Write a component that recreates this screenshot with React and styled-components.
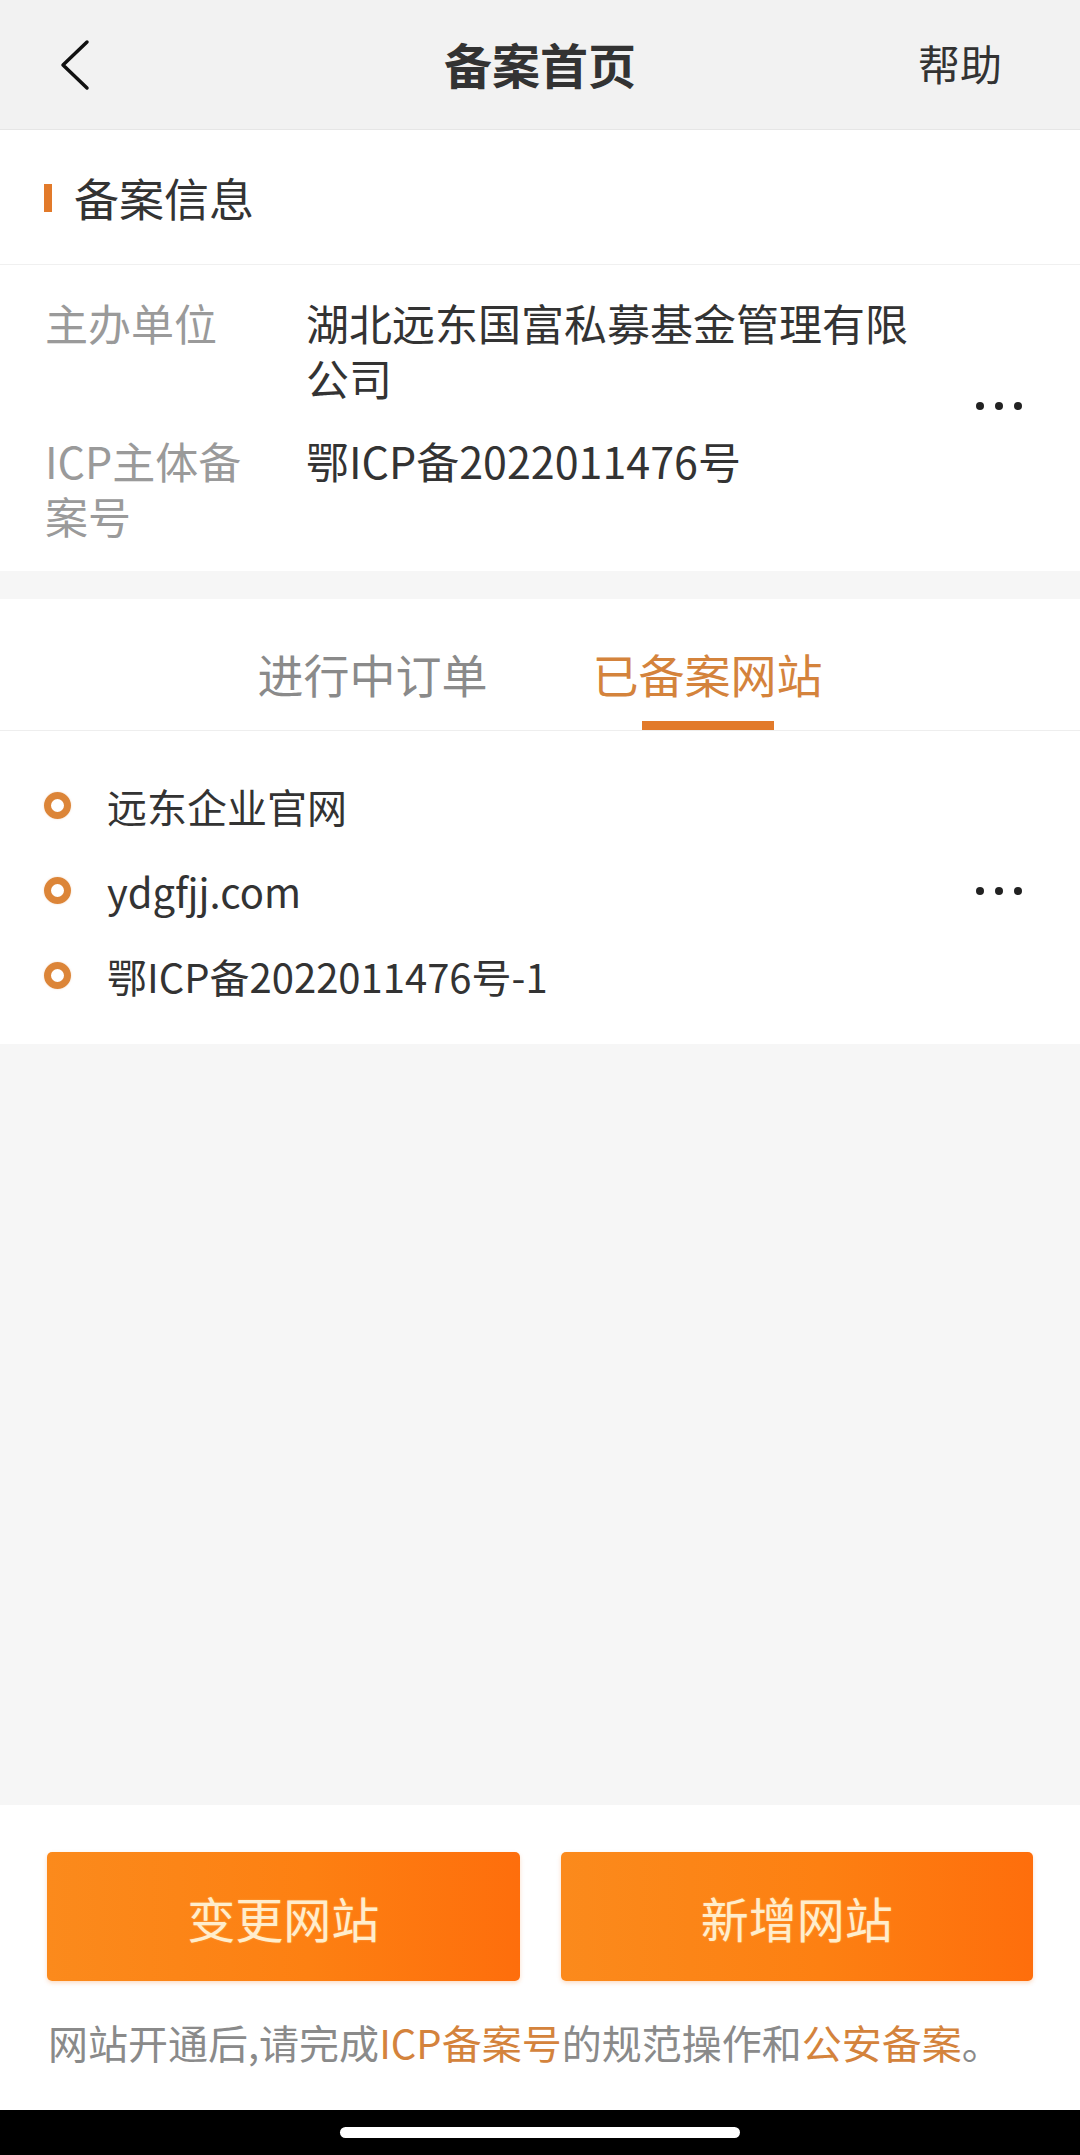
import React from 'react';
import styled, { createGlobalStyle } from 'styled-components';

const Colors = {
  text: '#333333',
  label: '#9a9a9a',
  muted: '#8a8a8a',
  orange: '#e27a2a',
  orangeText: '#d4833c',
  pageBg: '#f6f6f6',
  headerBg: '#f2f2f2',
  line: '#eeeeee',
};

const GlobalStyle = createGlobalStyle`
  * { box-sizing: border-box; }
  body {
    margin: 0;
    background: ${Colors.pageBg};
    font-family: "Noto Sans CJK SC", "Noto Sans", sans-serif;
    color: ${Colors.text};
  }
`;

const Page = styled.div`
  width: 1080px;
  min-height: 2155px;
  display: flex;
  flex-direction: column;
  background: ${Colors.pageBg};
`;

const Header = styled.header`
  height: 130px;
  display: grid;
  grid-template-columns: 1fr auto 1fr;
  align-items: center;
  background: ${Colors.headerBg};
  border-bottom: 1px solid #e6e6e6;
`;

const BackButton = styled.div`
  padding-left: 58px;
  display: flex;
  align-items: center;
`;

const Title = styled.h1`
  margin: 0;
  font-size: 48px;
  font-weight: 700;
  color: ${Colors.text};
  line-height: 1;
  padding-bottom: 4px;
`;

const HelpLink = styled.div`
  justify-self: end;
  padding-right: 78px;
  font-size: 42px;
  color: ${Colors.text};
  line-height: 1;
  padding-bottom: 4px;
`;

const Card = styled.section`
  background: #fff;
  margin-top: ${({ mt }) => mt || '0'};
`;

const CardTitle = styled.div`
  height: 135px;
  display: flex;
  align-items: center;
  padding-left: 44px;
  border-bottom: 1px solid #f0f0f0;
  font-size: 45px;
  color: ${Colors.text};
`;

const Marker = styled.span`
  width: 8px;
  height: 28px;
  background: ${Colors.orange};
  margin-right: 22px;
  margin-top: 2px;
`;

const InfoBody = styled.div`
  display: flex;
  padding: 30px 0 28px 45px;
`;

const InfoRows = styled.div`
  width: 895px;
  display: flex;
  flex-direction: column;
  gap: 28px;
`;

const InfoRow = styled.div`
  display: grid;
  grid-template-columns: 261px 1fr;
  font-size: 43px;
  line-height: 55px;
`;

const Label = styled.div`
  max-width: 215px;
  color: ${Colors.label};
`;

const Value = styled.div`
  color: ${Colors.text};
`;

const MoreDots = styled.div`
  margin-left: auto;
  margin-right: 58px;
  align-self: center;
  display: flex;
  gap: 11px;
  margin-bottom: ${({ lift }) => lift || '0'};

  span {
    width: 8px;
    height: 8px;
    border-radius: 50%;
    background: #222;
  }
`;

const Dots = ({ lift }) => (
  <MoreDots lift={lift}>
    <span />
    <span />
    <span />
  </MoreDots>
);

const TabBar = styled.div`
  height: 132px;
  display: flex;
  justify-content: center;
  gap: 105px;
  border-bottom: 1px solid ${Colors.line};
`;

const Tab = styled.div`
  position: relative;
  display: flex;
  align-items: center;
  padding-top: 16px;
  font-size: 46px;
  color: ${({ active }) => (active ? Colors.orangeText : Colors.muted)};

  &::after {
    content: '';
    display: ${({ active }) => (active ? 'block' : 'none')};
    position: absolute;
    bottom: 0;
    left: 50%;
    width: 132px;
    height: 9px;
    margin-left: -66px;
    background: ${Colors.orange};
  }
`;

const SiteBody = styled.div`
  display: flex;
  padding: 32px 0 26px 44px;
`;

const SiteList = styled.ul`
  list-style: none;
  margin: 0;
  padding: 0;
`;

const SiteItem = styled.li`
  height: 85px;
  display: flex;
  align-items: center;
  gap: 36px;
  font-size: 40px;
  color: ${Colors.text};
`;

const Ring = styled.span`
  width: 27px;
  height: 27px;
  border-radius: 50%;
  border: 7px solid #dc8538;
  box-shadow: 0 0 2px rgba(220, 133, 56, 0.35);
  flex: none;
`;

const Filler = styled.div`
  flex: 1;
`;

const Footer = styled.div`
  background: #fff;
  padding: 47px 47px 40px;
`;

const ButtonRow = styled.div`
  display: flex;
  gap: 41px;
`;

const ActionButton = styled.button`
  flex: 1;
  height: 129px;
  border: none;
  border-radius: 5px;
  background: linear-gradient(90deg, #fb8a1c 0%, #fd8012 55%, #fe6e0c 100%);
  box-shadow: 0 2px 4px rgba(240, 120, 30, 0.25);
  color: #ffedcc;
  font-family: inherit;
  font-size: 48px;
  text-shadow: 0 0 2px rgba(255, 230, 180, 0.4);
`;

const Notice = styled.p`
  margin: 33px 0 0;
  padding-left: 1px;
  font-size: 40px;
  line-height: 56px;
  color: ${Colors.muted};
  white-space: nowrap;
`;

const Highlight = styled.span`
  color: ${Colors.orangeText};
`;

const HomeBar = styled.div`
  height: 45px;
  background: #000;
  display: flex;
  align-items: center;
  justify-content: center;

  span {
    width: 400px;
    height: 11px;
    border-radius: 6px;
    background: #fff;
  }
`;

const sites = ['远东企业官网', 'ydgfjj.com', '鄂ICP备2022011476号-1'];

export default function App() {
  return (
    <Page>
      <GlobalStyle />
      <Header>
        <BackButton>
          <svg width="32" height="52" viewBox="0 0 32 52">
            <polyline
              points="29,3 5,26 29,49"
              fill="none"
              stroke="#111"
              strokeWidth="3.5"
              strokeLinecap="round"
              strokeLinejoin="round"
            />
          </svg>
        </BackButton>
        <Title>备案首页</Title>
        <HelpLink>帮助</HelpLink>
      </Header>

      <Card>
        <CardTitle>
          <Marker />
          备案信息
        </CardTitle>
        <InfoBody>
          <InfoRows>
            <InfoRow>
              <Label>主办单位</Label>
              <Value>湖北远东国富私募基金管理有限公司</Value>
            </InfoRow>
            <InfoRow>
              <Label>ICP主体备案号</Label>
              <Value>鄂ICP备2022011476号</Value>
            </InfoRow>
          </InfoRows>
          <Dots lift="26px" />
        </InfoBody>
      </Card>

      <Card mt="28px">
        <TabBar>
          <Tab>进行中订单</Tab>
          <Tab active>已备案网站</Tab>
        </TabBar>
        <SiteBody>
          <SiteList>
            {sites.map((s) => (
              <SiteItem key={s}>
                <Ring />
                {s}
              </SiteItem>
            ))}
          </SiteList>
          <Dots />
        </SiteBody>
      </Card>

      <Filler />

      <Footer>
        <ButtonRow>
          <ActionButton>变更网站</ActionButton>
          <ActionButton>新增网站</ActionButton>
        </ButtonRow>
        <Notice>
          网站开通后,请完成<Highlight>ICP备案号</Highlight>的规范操作和
          <Highlight>公安备案</Highlight>。
        </Notice>
      </Footer>
      <HomeBar>
        <span />
      </HomeBar>
    </Page>
  );
}
